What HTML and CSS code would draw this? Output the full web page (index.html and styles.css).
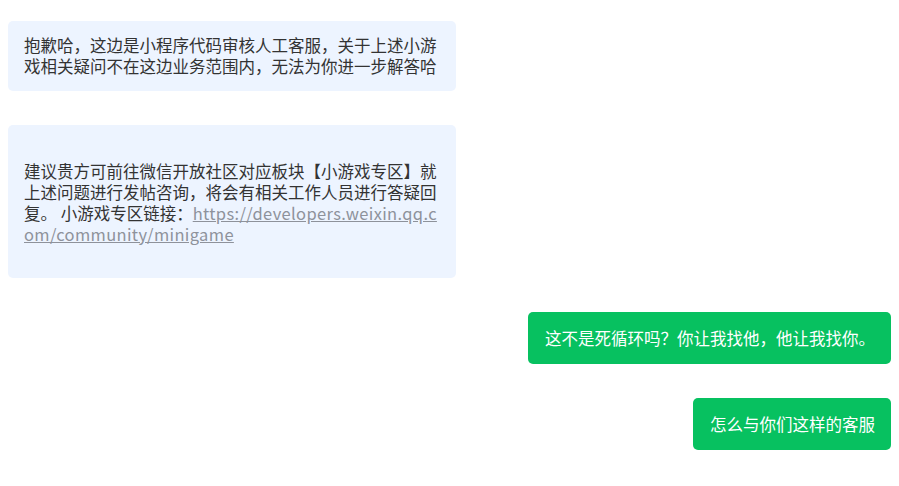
FILE: index.html
```html
<!DOCTYPE html>
<html lang="zh-CN">
<head>
    <meta charset="UTF-8">
    <meta name="viewport" content="width=device-width, initial-scale=1.0">
    <title>客服对话</title>
    <link rel="stylesheet" href="styles.css">
</head>
<body>
    <div class="chat">
        <div class="msg msg-left">
            <div class="bubble">抱歉哈，这边是小程序代码审核人工客服，关于上述小游戏相关疑问不在这边业务范围内，无法为你进一步解答哈</div>
        </div>

        <div class="msg msg-left">
            <div class="bubble bubble-tall">
                <p>建议贵方可前往微信开放社区对应板块【小游戏专区】就上述问题进行发帖咨询，将会有相关工作人员进行答疑回复。 小游戏专区链接：<a href="#">https://developers.weixin.qq.com/community/minigame</a></p>
            </div>
        </div>

        <div class="msg msg-right">
            <div class="bubble">这不是死循环吗？你让我找他，他让我找你。</div>
        </div>

        <div class="msg msg-right">
            <div class="bubble">怎么与你们这样的客服</div>
        </div>
    </div>
</body>
</html>
```

FILE: styles.css
```css
* {
    box-sizing: border-box;
    margin: 0;
    padding: 0;
}

body {
    font-family: "Noto Sans CJK SC", "Noto Sans", sans-serif;
    background: #fff;
    color: #333;
}

.chat {
    display: flex;
    flex-direction: column;
    gap: 34px;
    padding: 21px 8px 8px;
}

.msg {
    display: flex;
}

.msg-right {
    justify-content: flex-end;
}

.bubble {
    max-width: 448px;
    padding: 14px 16px;
    font-size: 16.5px;
    line-height: 21px;
    border-radius: 5px;
}

.msg-left .bubble {
    width: 448px;
    background-color: #edf4ff;
}

.msg-right .bubble {
    padding: 15.5px 16px 15.5px 17px;
    background-color: #07c160;
    color: #fff;
}

.bubble-tall {
    padding: 36px 16px 33px;
}

.bubble p {
    word-break: break-all;
}

.bubble a {
    color: #8e929b;
    text-decoration: underline;
    letter-spacing: 0.35px;
}
```
